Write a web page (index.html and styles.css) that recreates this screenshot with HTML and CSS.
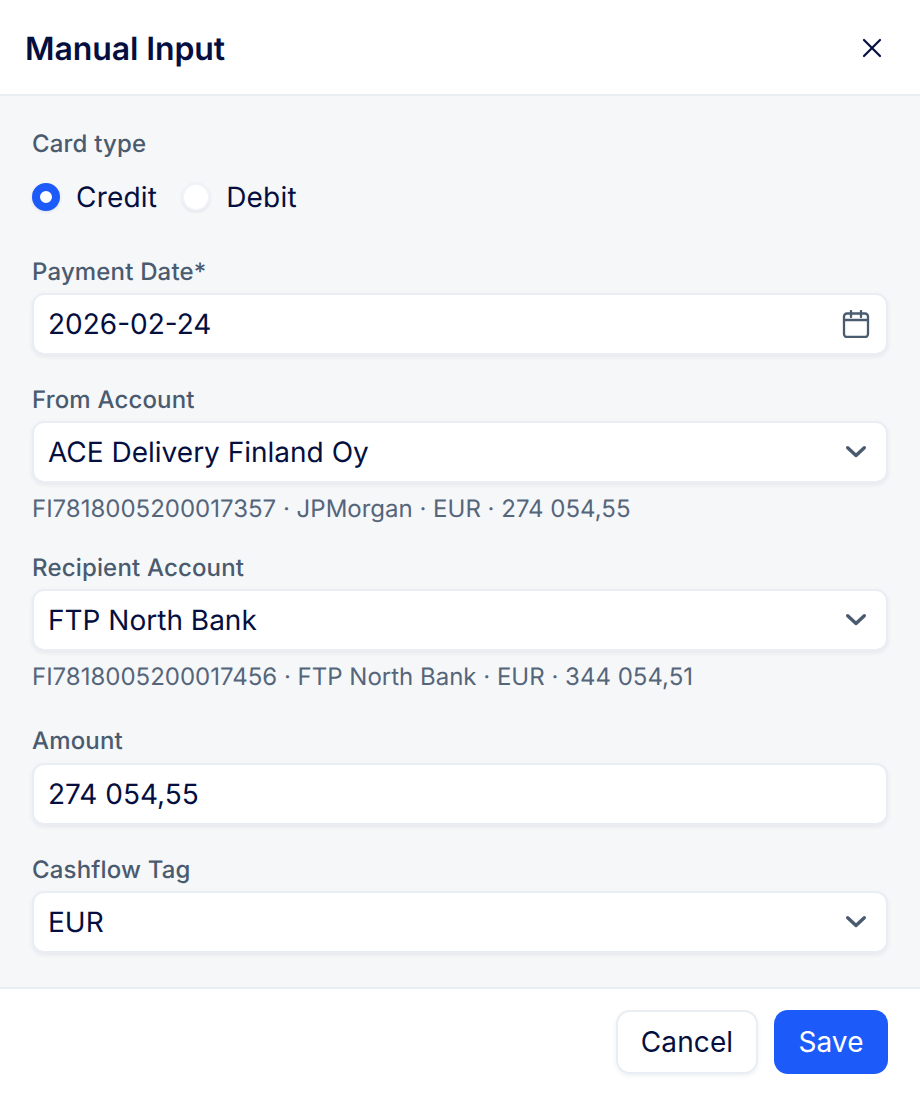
FILE: index.html
```html
<!DOCTYPE html>
<html lang="en">

<head>
    <meta charset="UTF-8">
    <title>Manual Input</title>
    <link rel="stylesheet" href="styles.css">
</head>

<body>
    <div class="modal">
        <header class="modal-header">
            <h1>Manual Input</h1>
            <button class="close-button" aria-label="Close">
                <svg width="24" height="24" viewBox="0 0 24 24" fill="none" stroke="#050f3f" stroke-width="2.2" stroke-linecap="round"><path d="M4 4l16 16M20 4L4 20"/></svg>
            </button>
        </header>

        <form class="modal-body">
            <div class="group-card">
                <div class="label">Card type</div>
                <div class="radio-row">
                    <label class="radio radio-on">Credit</label>
                    <label class="radio">Debit</label>
                </div>
            </div>

            <div class="group group-date">
                <div class="label">Payment Date*</div>
                <div class="field">
                    <span>2026-02-24</span>
                    <svg class="field-icon" width="28" height="28" viewBox="0 0 28 28" fill="none" stroke="#4a5b70" stroke-width="2.3" stroke-linecap="round" stroke-linejoin="round"><rect x="2" y="3.5" width="24" height="23.5" rx="3"/><path d="M2 10h24M9 1v6M19 1v6"/></svg>
                </div>
            </div>

            <div class="group group-from">
                <div class="label">From Account</div>
                <div class="field">
                    <span>ACE Delivery Finland Oy</span>
                    <svg class="field-icon" width="28" height="28" viewBox="0 0 28 28" fill="none" stroke="#4a5b70" stroke-width="3.4" stroke-linecap="round" stroke-linejoin="round"><path d="M5.7 9.7l8.3 7.8 8.3-7.8"/></svg>
                </div>
                <div class="hint">FI7818005200017357 · JPMorgan · EUR · 274 054,55</div>
            </div>

            <div class="group group-recipient">
                <div class="label">Recipient Account</div>
                <div class="field">
                    <span>FTP North Bank</span>
                    <svg class="field-icon" width="28" height="28" viewBox="0 0 28 28" fill="none" stroke="#4a5b70" stroke-width="3.4" stroke-linecap="round" stroke-linejoin="round"><path d="M5.7 9.7l8.3 7.8 8.3-7.8"/></svg>
                </div>
                <div class="hint">FI7818005200017456 · FTP North Bank · EUR · 344 054,51</div>
            </div>

            <div class="group group-amount">
                <div class="label">Amount</div>
                <div class="field">
                    <span>274 054,55</span>
                </div>
            </div>

            <div class="group group-tag">
                <div class="label">Cashflow Tag</div>
                <div class="field">
                    <span>EUR</span>
                    <svg class="field-icon" width="28" height="28" viewBox="0 0 28 28" fill="none" stroke="#4a5b70" stroke-width="3.4" stroke-linecap="round" stroke-linejoin="round"><path d="M5.7 9.7l8.3 7.8 8.3-7.8"/></svg>
                </div>
            </div>
        </form>

        <footer class="modal-footer">
            <button class="cancel-button">Cancel</button>
            <button class="save-button">Save</button>
        </footer>
    </div>
</body>

</html>
```

FILE: styles.css
```css
*, *::before {
    box-sizing: border-box;
}

body {
    margin: 0;
    font-family: Inter, "Liberation Sans", sans-serif;
    color: #050f3f;
    background-color: white;
    text-rendering: geometricPrecision;
}

.modal {
    display: flex;
    flex-direction: column;
    height: 1098px;
}

.modal-header {
    display: flex;
    align-items: center;
    justify-content: space-between;
    height: 96px;
    padding: 2px 36px 0 25px;
    border-bottom: 2px solid #e9eef4;
}

h1 {
    margin: 0;
    font-size: 32px;
    font-weight: 600;
    letter-spacing: -0.1px;
}

.close-button {
    display: flex;
    padding: 0;
    background: none;
    border: none;
    cursor: pointer;
}

.modal-body {
    flex: 1;
    padding: 32px 32px 0;
    background-color: #f6f7f9;
}

.label {
    height: 32px;
    font-size: 24px;
    font-weight: 500;
    line-height: 32px;
    letter-spacing: 0.17px;
    color: #4a5b70;
}

.radio-row {
    display: flex;
    gap: 25px;
    margin-top: 23px;
}

.radio {
    display: flex;
    align-items: center;
    gap: 16px;
    height: 28px;
    font-size: 28px;
    letter-spacing: 0.2px;
}

.radio::before {
    content: "";
    width: 28px;
    height: 28px;
    background-color: white;
    border: 2px solid #f0f3f7;
    border-radius: 50%;
    box-shadow: 0 1px 3px rgba(40, 60, 90, 0.12);
}

.radio-on::before {
    border: 8px solid #1c5bfa;
}

.group-date {
    margin-top: 45px;
}

.group-from {
    margin-top: 29px;
}

.group-recipient {
    margin-top: 27px;
}

.group-amount {
    margin-top: 32px;
}

.group-tag {
    margin-top: 29px;
}

.field {
    display: flex;
    align-items: center;
    justify-content: space-between;
    height: 62px;
    margin-top: 5px;
    padding: 0 16px 0 14px;
    font-size: 28px;
    background-color: white;
    border: 2px solid #e9eef4;
    border-radius: 12px;
    box-shadow: 0 2px 4px rgba(40, 60, 90, 0.08);
}

.group-amount .field {
    margin-top: 6px;
}

.hint {
    margin-top: 10px;
    font-size: 24px;
    line-height: 32px;
    color: #55657a;
}

.modal-footer {
    display: flex;
    justify-content: flex-end;
    gap: 16px;
    height: 111px;
    padding: 21px 32px 0;
    border-top: 2px solid #e9eef4;
}

.modal-footer button {
    height: 64px;
    font-family: inherit;
    font-size: 28px;
    letter-spacing: 0.1px;
    border-radius: 14px;
    cursor: pointer;
}

.cancel-button {
    width: 142px;
    color: #050f3f;
    background-color: white;
    border: 2px solid #e9eef4;
    box-shadow: 0 2px 4px rgba(40, 60, 90, 0.08);
}

.save-button {
    width: 114px;
    color: white;
    background-color: #1c5bfa;
    border: none;
}
```
